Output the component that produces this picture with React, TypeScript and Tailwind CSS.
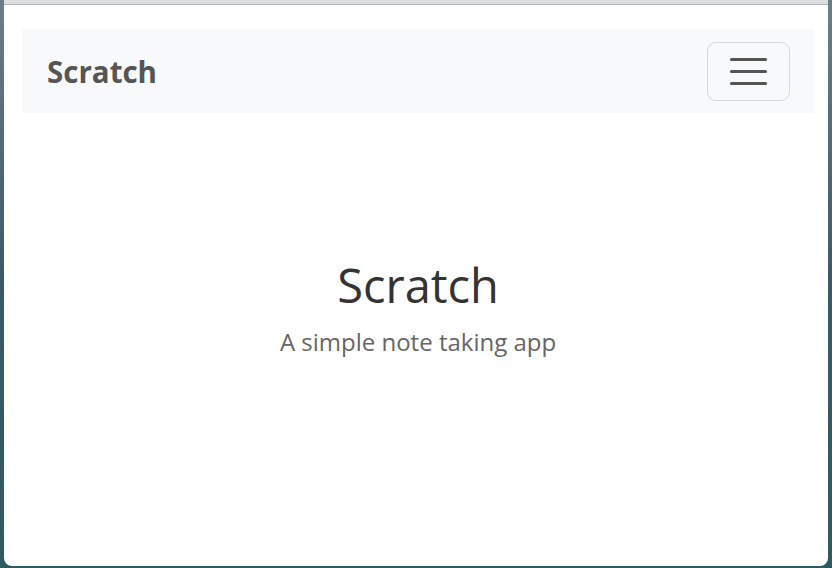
export default function App() {
  return (
    <div className="flex h-[568px] w-[832px] flex-col bg-gradient-to-b from-[#6d7e86] via-[#3a5868] to-[#2f5a60] pb-[2px] pl-[4px] pr-[4px] font-['Open_Sans',sans-serif]">
      <div className="flex flex-1 flex-col rounded-b-[8px] border-t-[4px] border-[#dcdde1] bg-white">
        <div className="h-px bg-[#b4b6ba]" />
        <nav className="ml-[18px] mr-[14px] mt-[24px] flex h-[84px] items-center justify-between bg-[#f8f9fa] pl-[25px] pr-[24px]">
          <span className="pt-[2px] text-[29.5px] font-bold leading-none text-[#555555]">Scratch</span>
          <button className="flex h-[59px] w-[83px] flex-col items-center justify-center gap-[9px] rounded-[9px] border border-[#d6d7d8]">
            <span className="h-[3px] w-[37px] rounded-full bg-[#555555]" />
            <span className="h-[3px] w-[37px] rounded-full bg-[#555555]" />
            <span className="h-[3px] w-[37px] rounded-full bg-[#555555]" />
          </button>
        </nav>
        <div className="mt-[149px] flex flex-col items-center pl-[4px]">
          <h1 className="text-[47px] font-medium leading-none text-[#333333]">Scratch</h1>
          <p className="mt-[21px] text-[24px] leading-none text-[#666666]">A simple note taking app</p>
        </div>
      </div>
    </div>
  );
}
